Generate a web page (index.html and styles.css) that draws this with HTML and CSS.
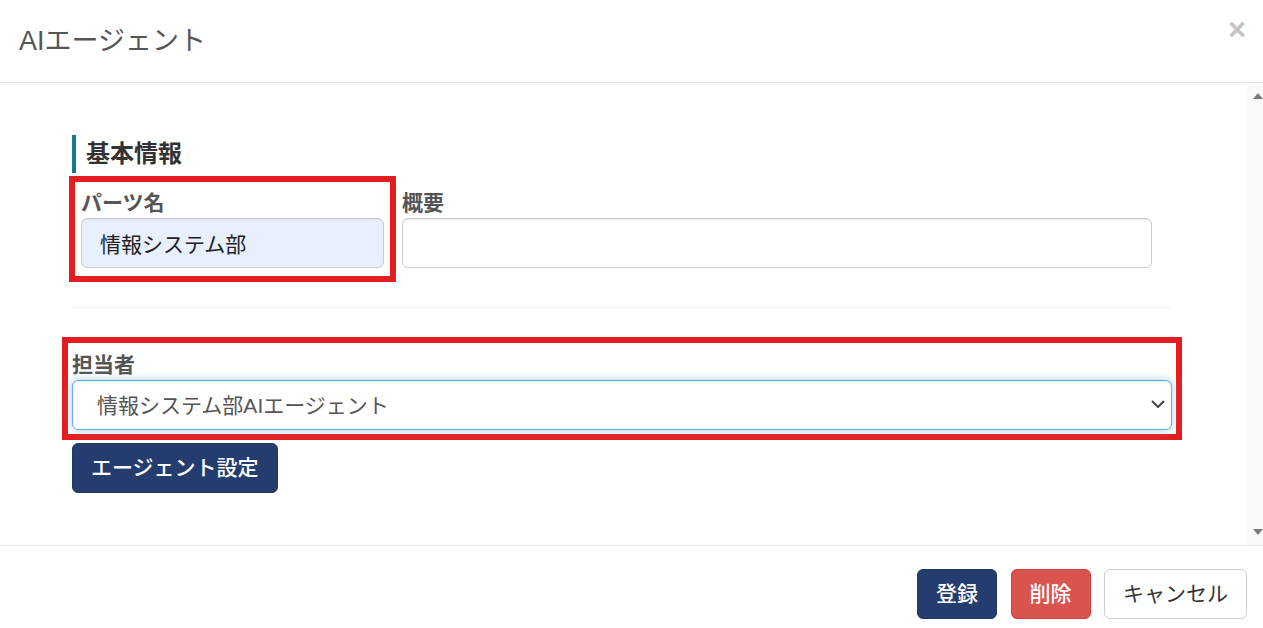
FILE: index.html
```html
<!DOCTYPE html>
<html lang="ja">
<head>
<meta charset="utf-8">
<title>AIエージェント</title>
<link rel="stylesheet" href="styles.css">
</head>
<body>
<div class="modal">
  <header class="modal-header">
    <h4 class="modal-title">AIエージェント</h4>
    <button class="close" type="button" aria-label="閉じる">×</button>
  </header>
  <div class="modal-body">
    <main class="body-content">
      <h5 class="section-title">基本情報</h5>
      <div class="row">
        <div class="field mark mark-a">
          <label class="field-label">パーツ名</label>
          <input class="control control-filled" type="text" value="情報システム部">
        </div>
        <div class="field">
          <label class="field-label">概要</label>
          <input class="control" type="text" value="">
        </div>
      </div>
      <hr class="divider">
      <div class="field field-wide mark mark-b">
        <label class="field-label">担当者</label>
        <div class="select-wrap">
          <select class="control control-select">
            <option>情報システム部AIエージェント</option>
          </select>
          <svg class="chevron" width="14" height="9" viewBox="0 0 14 9" aria-hidden="true">
            <path d="M1.5 1.5 L7 7 L12.5 1.5" fill="none" stroke="#444" stroke-width="2" stroke-linecap="round" stroke-linejoin="round"/>
          </svg>
        </div>
      </div>
      <button class="btn btn-primary btn-agent" type="button">エージェント設定</button>
    </main>
    <div class="scrollbar" aria-hidden="true">
      <span class="arrow arrow-up"></span>
      <span class="arrow arrow-down"></span>
    </div>
  </div>
  <footer class="modal-footer">
    <button class="btn btn-primary" type="button">登録</button>
    <button class="btn btn-danger" type="button">削除</button>
    <button class="btn btn-default" type="button">キャンセル</button>
  </footer>
</div>
</body>
</html>
```

FILE: styles.css
```css
* { box-sizing: border-box; }

html, body {
  margin: 0;
  padding: 0;
  background: #fff;
}

body {
  font-family: "Liberation Sans", "Noto Sans CJK JP", sans-serif;
  color: #333;
  font-size: 21px;
}

.modal {
  width: 1263px;
  height: 628px;
  display: flex;
  flex-direction: column;
  background: #fff;
}

.modal-header {
  height: 83px;
  flex: none;
  display: flex;
  align-items: center;
  justify-content: space-between;
  padding: 0 17px 0 19px;
  border-bottom: 1px solid #e5e5e5;
}

.modal-title {
  margin: 0;
  font-size: 27px;
  font-weight: normal;
  color: #555;
  line-height: 38px;
}

.close {
  align-self: flex-start;
  margin-top: 14px;
  padding: 0;
  border: 0;
  background: none;
  font-family: "Liberation Sans", sans-serif;
  font-size: 31px;
  font-weight: bold;
  line-height: 1;
  color: #c4c4c4;
  cursor: pointer;
}

.modal-body {
  height: 462px;
  flex: none;
  display: flex;
}

.body-content {
  flex: 1;
  min-width: 0;
  padding: 52px 76px 0 72px;
}

.scrollbar {
  width: 16px;
  flex: none;
  display: flex;
  flex-direction: column;
  justify-content: space-between;
  align-items: flex-end;
  padding: 10px 0 10px;
  background: #f9f9f9;
}

.arrow {
  width: 0;
  height: 0;
  border-left: 5.5px solid transparent;
  border-right: 5.5px solid transparent;
}

.arrow-up { border-bottom: 6px solid #7a7a7a; }
.arrow-down { border-top: 6px solid #7a7a7a; }

.section-title {
  margin: 0;
  height: 38px;
  line-height: 38px;
  padding-left: 10px;
  border-left: 4px solid #167a8c;
  font-size: 24px;
  font-weight: bold;
  color: #333;
}

.row {
  display: grid;
  grid-template-columns: 303px 1fr;
  column-gap: 18px;
  padding: 0 19px 0 9px;
  margin-top: 15px;
}

.field {
  display: flex;
  flex-direction: column;
  padding-bottom: 2px;
}

.field-label {
  display: block;
  height: 30px;
  line-height: 30px;
  font-size: 21px;
  font-weight: bold;
  color: #555;
}

.control {
  display: block;
  width: 100%;
  height: 50px;
  padding: 0 18px;
  border: 1px solid #ccc;
  border-radius: 6px;
  background: #fff;
  font-family: "Liberation Sans", "Noto Sans CJK JP", sans-serif;
  font-size: 21px;
  color: #555;
  box-shadow: inset 0 1px 1px rgba(0, 0, 0, 0.075);
}

.control-filled {
  background: #e8f0fe;
  color: #222;
}

.select-wrap {
  position: relative;
}

.control-select {
  -webkit-appearance: none;
  appearance: none;
  padding: 0 40px 0 24px;
  border-color: #66afe9;
  box-shadow: inset 0 1px 1px rgba(0, 0, 0, 0.075), 0 0 8px rgba(102, 175, 233, 0.6);
  outline: none;
}

.chevron {
  position: absolute;
  right: 7px;
  top: 20px;
  pointer-events: none;
}

.divider {
  margin: 37px 0 39px;
  border: 0;
  border-top: 1px solid #eee;
}

.field-wide {
  padding-top: 3px;
  padding-bottom: 0;
  margin-right: -1px;
}

.mark {
  outline: 6px solid #e41e20;
}

.mark-a { outline-offset: 6px; }
.mark-b { outline-offset: 4px; }

.btn {
  display: inline-block;
  height: 50px;
  padding: 0 18px;
  border: 1px solid transparent;
  border-radius: 6px;
  font-family: "Liberation Sans", "Noto Sans CJK JP", sans-serif;
  font-size: 21px;
  font-weight: 500;
  line-height: 48px;
  cursor: pointer;
}

.btn-primary {
  background: #253c6e;
  border-color: #22386a;
  color: #fff;
}

.btn-danger {
  background: #d9534f;
  border-color: #d43f3a;
  color: #fff;
}

.btn-default {
  background: #fff;
  border-color: #ccc;
  color: #333;
  font-weight: normal;
}

.btn-agent {
  margin-top: 13px;
}

.modal-footer {
  flex: 1;
  display: flex;
  justify-content: flex-end;
  align-items: flex-start;
  gap: 13.5px;
  padding: 23px 16px 0 0;
  border-top: 1px solid #e5e5e5;
}
```
